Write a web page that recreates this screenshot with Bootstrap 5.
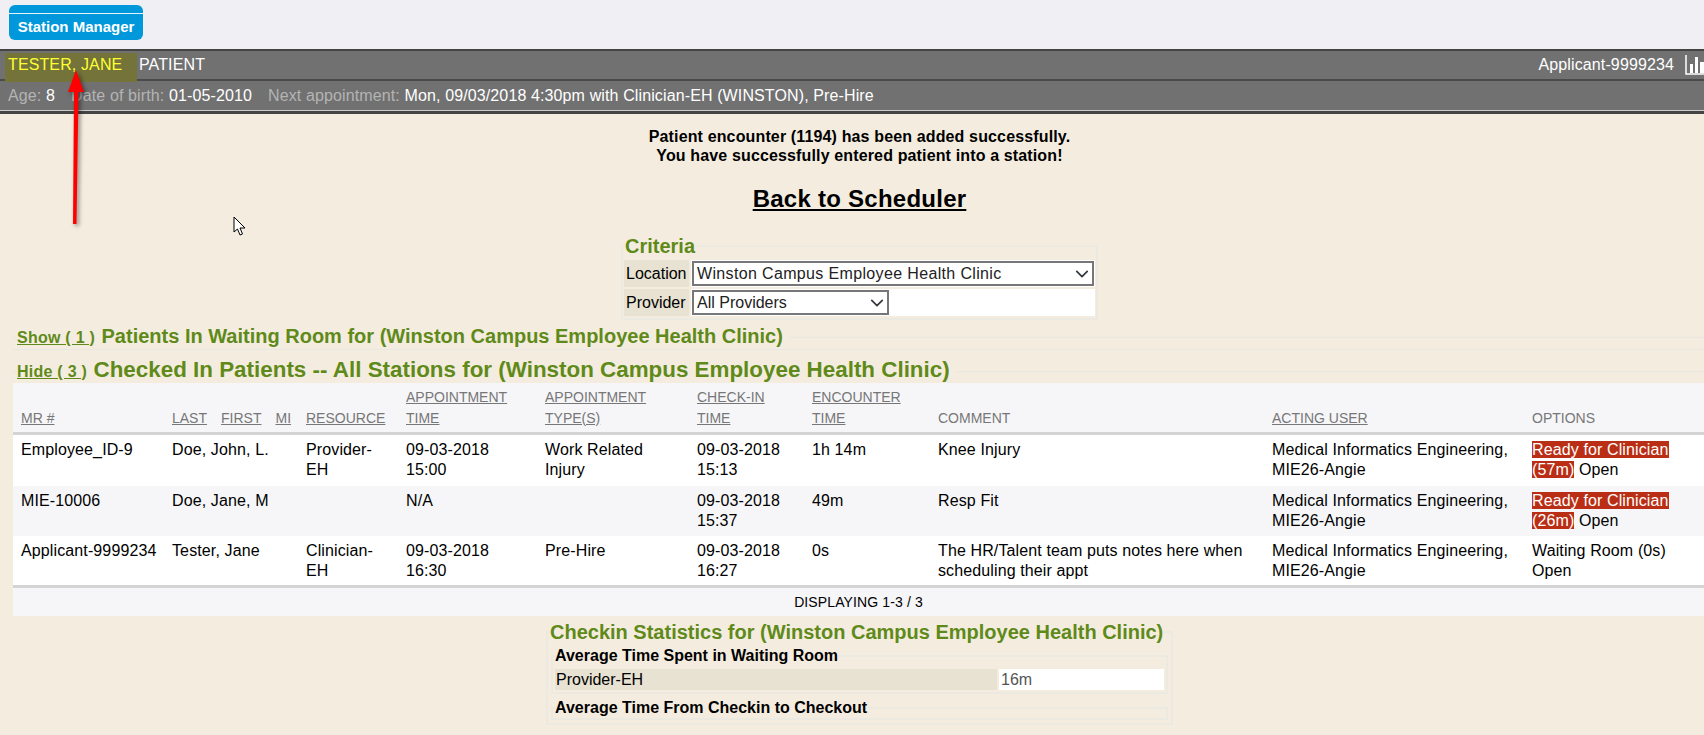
<!DOCTYPE html>
<html lang="en">
<head>
  <meta charset="UTF-8">
  <meta name="viewport" content="width=device-width, initial-scale=1">
  <title>Station Manager</title>
  <link href="https://cdn.jsdelivr.net/npm/bootstrap@5.3.2/dist/css/bootstrap.min.css" rel="stylesheet">
  <style>
    html, body { height: 735px; overflow: hidden; }
    body {
      background: #f4eddf;
      color: #000;
      font-family: "Liberation Sans", Arial, sans-serif;
      font-size: 16px;
      line-height: 20px;
      position: relative;
    }
    .top-strip { background: #efeff4; height: 49px; padding: 5px 0 0 9px; }
    .btn-station {
      background: #0098db;
      border: 0;
      border-radius: 6px;
      color: #fff;
      display: block;
      font-size: 15px;
      font-weight: 700;
      height: 35px;
      line-height: 18px;
      padding: 9px 0 0;
      position: relative;
      text-align: center;
      width: 134px;
    }
    .btn-station::before {
      background: #e4f3fb;
      content: "";
      height: 1px;
      left: 0;
      position: absolute;
      right: 0;
      top: 8px;
    }
    .pt-bar { background: #717171; border-top: 2px solid #444; color: #fff; letter-spacing: .12px; }
    .pt-row1 { height: 30px; border-bottom: 2px solid #4a4a4a; }
    .pt-name {
      background: #73733a;
      color: #ffff33;
      height: 29px;
      line-height: 24px;
      margin: 2px 0 -1px 5px;
      padding-left: 3px;
      width: 132px;
    }
    .pt-kind { line-height: 28px; margin-left: 2px; }
    .pt-id { line-height: 28px; margin-right: 11px; }
    .pt-chart { display: block; margin-top: 4px; }
    .pt-row2 {
      border-bottom: 3px solid #444;
      box-shadow: inset 0 -1px 0 #ccc;
      height: 33px;
      line-height: 29px;
      padding-left: 8px;
    }
    .pt-label { color: #b4b4b4; }
    .pt-gap { margin-left: 11.5px; }
    .msg-box { font-weight: 700; letter-spacing: .14px; line-height: 19px; padding: 13px 0 0 15px; text-align: center; }
    .back-link {
      color: #000;
      display: block;
      font-size: 24px;
      font-weight: 700;
      letter-spacing: .25px;
      line-height: 28px;
      margin-top: 20px;
      padding-left: 15px;
      text-align: center;
    }
    .crit-set {
      border: 2px solid #ece9e0;
      margin: 23px 0 0 621px;
      padding: 0 1px 2px;
      width: 477px;
    }
    .crit-set legend, .stat-set legend {
      color: #5f8a1a;
      float: none;
      font-size: 20px;
      font-weight: 700;
      line-height: 20px;
      margin: 0 0 0 1px;
      padding: 0;
      width: auto;
    }
    .crit-set legend { margin-bottom: 4px; }
    .crit-row { display: flex; gap: 2px; margin-bottom: 2px; height: 27px; }
    .crit-label { background: #e8e2d2; line-height: 27px; padding-left: 2px; width: 65px; }
    .crit-value { background: #fff; flex: 1; padding: 1px; display: flex; align-items: center; }
    .crit-select {
      border: 2px solid #777;
      border-radius: 0;
      color: #222;
      font-size: 16px;
      height: 25px;
      line-height: 19px;
      padding: 0 20px 0 3px;
      background-position: right 1px center;
      background-size: 18px 14px;
    }
    .crit-wide { letter-spacing: .35px; }
    .crit-short { width: 197px; }
    .sect-set {
      border: 1px solid #e9e7e1;
      border-width: 1px 0;
      margin: 5px 0 0 13px;
      padding: 0;
      width: 1700px;
    }
    .sect-set legend {
      float: none;
      font-size: 16px;
      line-height: 23px;
      margin: 0 0 0 4px;
      padding: 0 6px 0 0;
      width: auto;
    }
    .sect-toggle { color: #5f8a1a; font-weight: 700; letter-spacing: .25px; margin-right: 2px; }
    .sect-title { color: #5f8a1a; font-size: 20px; font-weight: 700; }
    .sect-big { font-size: 22.4px; }
    .sect-two { border-bottom: 0; margin-top: 6px; }
    .sect-two legend { line-height: 28px; margin-bottom: -3px; }
    .pt-table {
      color: #000;
      letter-spacing: .12px;
      margin: 0;
      table-layout: fixed;
      width: 1691px;
    }
    .pt-table th, .pt-table td {
      border: 0;
      line-height: 20.5px;
      padding: 5px 8px;
      vertical-align: top;
    }
    .pt-table thead th {
      background: #f6f6f9;
      border-bottom: 3px solid #d4d4d4;
      color: #777;
      font-size: 14px;
      font-weight: 400;
      letter-spacing: 0;
      height: 50px;
      line-height: 21px;
      padding: 3px 8px 3px;
      vertical-align: bottom;
    }
    .pt-table thead a { color: #777; margin-right: 14px; }
    .pt-table tbody td { background: #fff; height: 50px; }
    .pt-table tbody td:first-child { white-space: nowrap; }
    .pt-table tbody tr:nth-child(2) td { background: #f6f6f9; padding-bottom: 4px; }
    .pt-table tbody tr:last-child td { border-bottom: 3px solid #d4d4d4; height: 51px; padding-bottom: 2px; }
    .pt-table tfoot td {
      background: #f6f6f9;
      font-size: 14px;
      height: 28px;
      line-height: 28px;
      padding: 0;
      text-align: center;
    }
    .w-mr { width: 151px; }
    .w-name { width: 134px; }
    .w-res { width: 100px; }
    .w-time { width: 139px; }
    .w-type { width: 152px; }
    .w-chk { width: 115px; }
    .w-enc { width: 126px; }
    .w-com { width: 334px; }
    .w-act { width: 260px; }
    .w-opt { width: 180px; }
    .ready-tag { background: #b92e15; color: #fff; }
    .stat-set {
      border: 2px solid #ece9e0;
      margin: 5px 0 0 546px;
      padding: 0 3px 3px;
      width: 627px;
    }
    .stat-set legend { line-height: 22px; margin: 0 0 3px -1px; }
    .stat-set .stat-inner { border: 2px solid #ece9e0; margin: 0 0 4px 0; padding: 0 2px 2px; }
    .stat-set .stat-inner legend { color: #000; font-size: 16px; line-height: 20px; margin-left: 0; }
    .stat-row { display: flex; gap: 2px; height: 21px; line-height: 21px; }
    .stat-label { background: #e8e2d2; padding-left: 1px; width: 442px; }
    .stat-value { background: #fff; color: #555; flex: 1; padding-left: 2px; }
    .stat-set .stat-last { padding-bottom: 0; }
    .stat-set .stat-last legend { margin-bottom: 0; }
    .mark-arrow { filter: drop-shadow(2px 2px 2px rgba(0,0,0,.45)); left: 60px; position: absolute; top: 64px; }
    .mark-cursor { left: 233px; position: absolute; top: 216px; }
  </style>
</head>
<body>

<div class="top-strip">
  <button type="button" class="btn btn-station">Station Manager</button>
</div>

<div class="pt-bar">
  <div class="pt-row1 d-flex">
    <div class="pt-name">TESTER, JANE</div>
    <div class="pt-kind">PATIENT</div>
    <div class="pt-id ms-auto">Applicant-9999234</div>
    <svg class="pt-chart" width="19" height="20" viewBox="0 0 19 20">
      <path d="M1 0v19h18" fill="none" stroke="#fff" stroke-width="1.5"/>
      <path d="M5 9h3v9H5zM10 2h3v16h-3zM15 7h4v11h-4z" fill="#fff"/>
    </svg>
  </div>
  <div class="pt-row2">
    <span class="pt-label">Age:</span> 8
    <span class="pt-label pt-gap">Date of birth:</span> 01-05-2010
    <span class="pt-label pt-gap">Next appointment:</span> Mon, 09/03/2018 4:30pm with Clinician-EH (WINSTON), Pre-Hire
  </div>
</div>

<div class="msg-box">
  Patient encounter (1194) has been added successfully.<br>
  You have successfully entered patient into a station!
</div>
<a href="#" class="back-link">Back to Scheduler</a>

<fieldset class="crit-set">
  <legend>Criteria</legend>
  <div class="crit-row">
    <div class="crit-label">Location</div>
    <div class="crit-value">
      <select class="form-select crit-select crit-wide"><option>Winston Campus Employee Health Clinic</option></select>
    </div>
  </div>
  <div class="crit-row mb-0">
    <div class="crit-label">Provider</div>
    <div class="crit-value">
      <select class="form-select crit-select crit-short"><option>All Providers</option></select>
    </div>
  </div>
</fieldset>

<fieldset class="sect-set">
  <legend>
    <a href="#" class="sect-toggle">Show ( 1 )</a>
    <span class="sect-title">Patients In Waiting Room for (Winston Campus Employee Health Clinic)</span>
  </legend>
</fieldset>

<fieldset class="sect-set sect-two">
  <legend>
    <a href="#" class="sect-toggle">Hide ( 3 )</a>
    <span class="sect-title sect-big">Checked In Patients -- All Stations for (Winston Campus Employee Health Clinic)</span>
  </legend>
  <table class="table pt-table">
    <thead>
      <tr>
        <th class="w-mr"><a href="#">MR #</a></th>
        <th class="w-name"><a href="#">LAST</a><a href="#">FIRST</a><a href="#" class="me-0">MI</a></th>
        <th class="w-res"><a href="#">RESOURCE</a></th>
        <th class="w-time"><a href="#">APPOINTMENT<br>TIME</a></th>
        <th class="w-type"><a href="#">APPOINTMENT<br>TYPE(S)</a></th>
        <th class="w-chk"><a href="#">CHECK-IN<br>TIME</a></th>
        <th class="w-enc"><a href="#">ENCOUNTER<br>TIME</a></th>
        <th class="w-com">COMMENT</th>
        <th class="w-act"><a href="#">ACTING USER</a></th>
        <th class="w-opt">OPTIONS</th>
      </tr>
    </thead>
    <tbody>
      <tr>
        <td>Employee_ID-9</td>
        <td>Doe, John, L.</td>
        <td>Provider-EH</td>
        <td>09-03-2018 15:00</td>
        <td>Work Related Injury</td>
        <td>09-03-2018 15:13</td>
        <td>1h 14m</td>
        <td>Knee Injury</td>
        <td>Medical Informatics Engineering, MIE26-Angie</td>
        <td><span class="ready-tag">Ready for Clinician</span><br><span class="ready-tag">(57m)</span> Open</td>
      </tr>
      <tr>
        <td>MIE-10006</td>
        <td>Doe, Jane, M</td>
        <td></td>
        <td>N/A</td>
        <td></td>
        <td>09-03-2018 15:37</td>
        <td>49m</td>
        <td>Resp Fit</td>
        <td>Medical Informatics Engineering, MIE26-Angie</td>
        <td><span class="ready-tag">Ready for Clinician</span><br><span class="ready-tag">(26m)</span> Open</td>
      </tr>
      <tr>
        <td>Applicant-9999234</td>
        <td>Tester, Jane</td>
        <td>Clinician-EH</td>
        <td>09-03-2018 16:30</td>
        <td>Pre-Hire</td>
        <td>09-03-2018 16:27</td>
        <td>0s</td>
        <td>The HR/Talent team puts notes here when scheduling their appt</td>
        <td>Medical Informatics Engineering, MIE26-Angie</td>
        <td>Waiting Room (0s) Open</td>
      </tr>
    </tbody>
    <tfoot>
      <tr><td colspan="10">DISPLAYING 1-3 / 3</td></tr>
    </tfoot>
  </table>
</fieldset>

<fieldset class="stat-set">
  <legend>Checkin Statistics for (Winston Campus Employee Health Clinic)</legend>
  <fieldset class="stat-inner">
    <legend>Average Time Spent in Waiting Room</legend>
    <div class="stat-row">
      <div class="stat-label">Provider-EH</div>
      <div class="stat-value">16m</div>
    </div>
  </fieldset>
  <fieldset class="stat-inner stat-last mb-0">
    <legend>Average Time From Checkin to Checkout</legend>
  </fieldset>
</fieldset>

<!-- annotation drawn over the screenshot -->
<svg class="mark-arrow" width="34" height="170" viewBox="0 0 34 170">
  <path d="M16 6L24 28H18.5L16.5 160H13L14 28H8z" fill="#f00"/>
</svg>
<svg class="mark-cursor" width="14" height="21" viewBox="0 0 14 21">
  <path d="M1 1v15l3.5-3 2.5 6 2.5-1-2.5-6H12z" fill="#fff" stroke="#000" stroke-width="1"/>
</svg>

<script src="https://cdn.jsdelivr.net/npm/bootstrap@5.3.2/dist/js/bootstrap.bundle.min.js"></script>
</body>
</html>
